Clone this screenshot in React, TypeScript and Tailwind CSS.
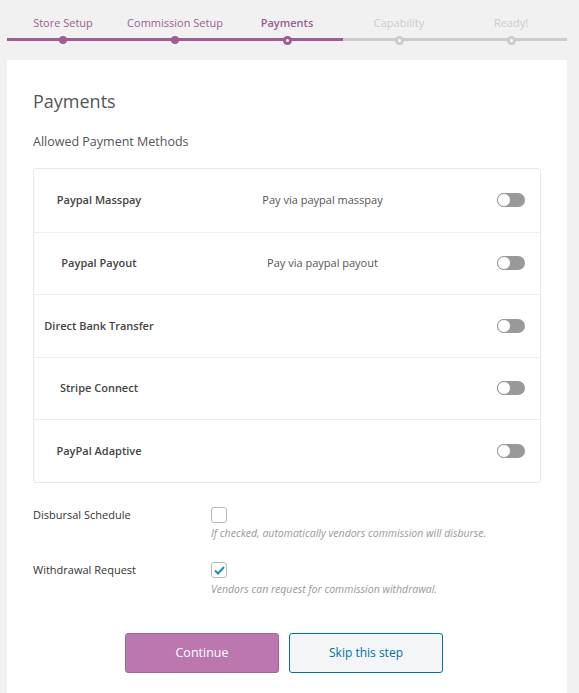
const steps = [
  { label: "Store Setup", state: "done" },
  { label: "Commission Setup", state: "done" },
  { label: "Payments", state: "active" },
  { label: "Capability", state: "todo" },
  { label: "Ready!", state: "todo" },
];

const methods = [
  { name: "Paypal Masspay", desc: "Pay via paypal masspay" },
  { name: "Paypal Payout", desc: "Pay via paypal payout" },
  { name: "Direct Bank Transfer", desc: "" },
  { name: "Stripe Connect", desc: "" },
  { name: "PayPal Adaptive", desc: "" },
];

const Toggle = () => (
  <div className="w-[28px] h-[14px] rounded-full bg-[#999] relative">
    <div className="absolute left-0 top-0 w-[14px] h-[14px] rounded-full bg-white border border-[#999]" />
  </div>
);

const App = () => {
  return (
    <div
      className="min-h-screen bg-[#f1f1f1] text-[#555]"
      style={{ fontFamily: '"Open Sans", "Noto Sans", sans-serif' }}
    >
      {/* stepper */}
      <div className="flex pl-[7px] pt-[15px]">
        {steps.map((s, i) => (
          <div key={s.label} className="w-[112px] flex flex-col items-center">
            <div
              className={
                "text-[11px] leading-[16px] h-[17px] " +
                (s.state === "todo"
                  ? "text-[#ccc]"
                  : s.state === "active"
                  ? "text-[#9c5d90] font-semibold"
                  : "text-[#9c5d90]")
              }
            >
              {s.label}
            </div>
            <div className="relative w-full h-[16px] flex items-center justify-center">
              <div
                className={
                  "absolute left-0 right-0 top-[6px] h-[3px] " +
                  (i < 3 ? "bg-[#9c5d90]" : "bg-[#ccc]")
                }
              />
              {s.state === "done" && (
                <div className="relative w-[8px] h-[8px] rounded-full bg-[#9c5d90]" />
              )}
              {s.state === "active" && (
                <div className="relative w-[9px] h-[9px] rounded-full bg-[#9c5d90] flex items-center justify-center">
                  <div className="w-[3px] h-[3px] rounded-full bg-white" />
                </div>
              )}
              {s.state === "todo" && (
                <div className="relative w-[9px] h-[9px] rounded-full bg-[#ccc] flex items-center justify-center">
                  <div className="w-[3px] h-[3px] rounded-full bg-white" />
                </div>
              )}
            </div>
          </div>
        ))}
      </div>

      {/* card */}
      <div className="ml-[7px] mt-[12px] w-[560px] bg-white px-[26px] pt-[28px] pb-[20px] min-h-[633px]">
        <h1 className="text-[18px] leading-[26px] text-[#555] font-normal">Payments</h1>
        <p className="mt-[19px] text-[12.5px] leading-[18px]">Allowed Payment Methods</p>

        <div className="mt-[17px] w-[508px] border border-[#e8e8e8] rounded-[3px]">
          {methods.map((m, i) => (
            <div
              key={m.name}
              className={
                "flex items-center h-[62.5px] " + (i > 0 ? "border-t border-[#eee]" : "")
              }
            >
              <div className="w-[130px] text-center text-[11px] font-semibold text-[#444]">
                {m.name}
              </div>
              <div className="w-[317px] text-center text-[11px] text-[#555]">{m.desc}</div>
              <div className="flex-1 flex justify-center">
                <Toggle />
              </div>
            </div>
          ))}
        </div>

        <div className="mt-[23px] flex">
          <div className="w-[178px] text-[11px] text-[#333] pt-[1px]">Disbursal Schedule</div>
          <div>
            <div className="mt-[1px] w-[16px] h-[16px] border border-[#b4b9be] rounded-[3px] bg-white" />
            <div className="mt-[3px] text-[10.5px] italic text-[#999]">
              If checked, automatically vendors commission will disburse.
            </div>
          </div>
        </div>

        <div className="mt-[20px] flex">
          <div className="w-[178px] text-[11px] text-[#333] pt-[1px]">Withdrawal Request</div>
          <div>
            <div className="mt-[1px] w-[16px] h-[16px] border border-[#b4b9be] rounded-[3px] bg-white flex items-center justify-center">
              <svg width="11" height="9" viewBox="0 0 11 9">
                <path d="M1 4.5 L4 7.5 L10 1" stroke="#1e8cbe" strokeWidth="2" fill="none" />
              </svg>
            </div>
            <div className="mt-[4px] text-[10.5px] italic text-[#999]">
              Vendors can request for commission withdrawal.
            </div>
          </div>
        </div>

        <div className="mt-[35px] flex gap-[10px] pl-[92px]">
          <button className="w-[154px] h-[40px] rounded-[3px] bg-[#bb77ae] border border-[#a36597] text-white text-[12.5px]">
            Continue
          </button>
          <button className="w-[154px] h-[40px] rounded-[3px] bg-[#f3f5f6] border border-[#0071a1] text-[#0071a1] text-[12px]">
            Skip this step
          </button>
        </div>
      </div>
    </div>
  );
};

export default App;
